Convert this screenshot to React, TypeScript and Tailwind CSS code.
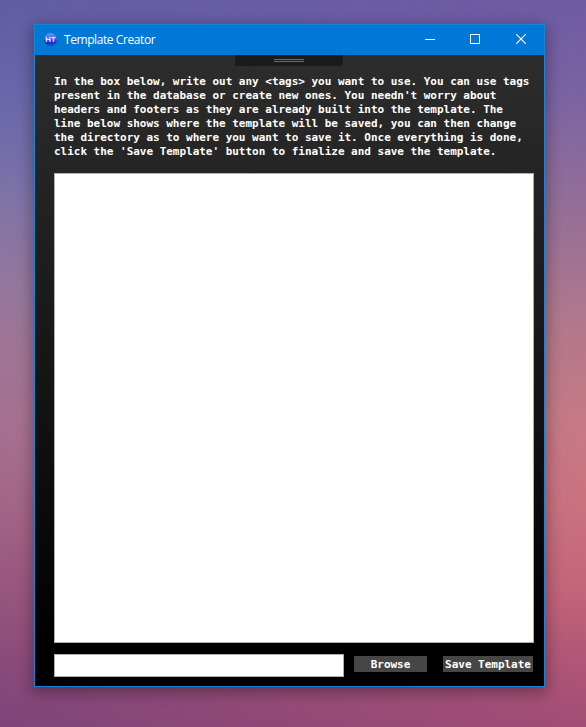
const instructions = [
  "In the box below, write out any <tags> you want to use. You can use tags",
  "present in the database or create new ones. You needn't worry about",
  'headers and footers as they are already built into the template. The',
  'line below shows where the template will be saved, you can then change',
  'the directory as to where you want to save it. Once everything is done,',
  "click the 'Save Template' button to finalize and save the template.",
];

function AppIcon() {
  return (
    <svg width="13" height="13" viewBox="0 0 13 13">
      <defs>
        <linearGradient id="orb" x1="0" y1="0" x2="0" y2="1">
          <stop offset="0" stopColor="#6f93ee" />
          <stop offset="0.45" stopColor="#4a66e0" />
          <stop offset="0.65" stopColor="#1230c8" />
          <stop offset="1" stopColor="#1c43e0" />
        </linearGradient>
      </defs>
      <circle cx="6.5" cy="6.5" r="6.4" fill="url(#orb)" />
      <text x="6.5" y="9.4" textAnchor="middle" fontSize="7.8" fontWeight="700" fontFamily="Liberation Sans, sans-serif" fill="#e8ecff">
        HT
      </text>
    </svg>
  );
}

function TitleBar() {
  return (
    <header className="flex h-[30px] shrink-0 items-center bg-[#0078d7] pl-[9px]">
      <div className="mb-[2px]">
        <AppIcon />
      </div>
      <h1 className="ml-[7px] mb-px flex-1 whitespace-nowrap font-['Open_Sans','Noto_Sans',sans-serif] text-[12px] leading-4 tracking-[-0.42px] text-white">
        Template Creator
      </h1>
      <div className="flex h-full pb-[2px] text-white">
        <button className="flex w-[45px] items-center justify-center" aria-label="Minimize">
          <svg width="10" height="10" shapeRendering="crispEdges"><path d="M0 5.5h10" stroke="currentColor" /></svg>
        </button>
        <button className="flex w-[45px] items-center justify-center" aria-label="Maximize">
          <svg width="10" height="10" shapeRendering="crispEdges"><path d="M.5 .5h9v9h-9z" fill="none" stroke="currentColor" /></svg>
        </button>
        <button className="flex w-[47px] items-center justify-center" aria-label="Close">
          <svg width="10" height="10"><path d="M.2 .2l9.6 9.6M9.8 .2L.2 9.8" stroke="currentColor" strokeWidth="1.15" /></svg>
        </button>
      </div>
    </header>
  );
}

export default function App() {
  return (
    <div className="relative h-[727px] w-[586px] overflow-hidden bg-[linear-gradient(180deg,#625da2_0%,#6865aa_11%,#7670a9_23%,#8275a5_29%,#95779d_40%,#9e7597_47%,#a57190_58%,#a46788_68%,#9a5a81_78%,#8b4c7b_90%,#7e447a_100%)] pl-[34px] pt-6">
      <div className="absolute inset-0 bg-[linear-gradient(180deg,#6f5ba3_0%,#7862a2_11%,#8b6a9b_22%,#9c7194_33%,#b0778c_43%,#c57a84_58%,#cb727e_69%,#c4657a_81%,#b35777_90%,#a24d75_100%)] [mask-image:linear-gradient(90deg,transparent_0%,black_100%)]" />
      <main className="relative flex h-[663px] w-[511px] flex-col border border-[#1883d7] bg-black shadow-[0_4px_14px_2px_rgba(0,0,0,0.33)]">
        <TitleBar />
        <section className="flex flex-1 flex-col bg-[linear-gradient(180deg,#2d2d2d_0%,#000000_94%)] pl-[19px] pr-[10px]">
          <div className="ml-[181px] flex h-[11px] w-[108px] shrink-0 flex-col items-center gap-px bg-[#1b1b1b] pt-1">
            <div className="h-px w-[30px] bg-[#6c6c6c]" />
            <div className="h-px w-[30px] bg-[#6c6c6c]" />
          </div>
          <div className="mt-[9px] whitespace-pre font-['DejaVu_Sans_Mono',monospace] text-[11px] font-bold leading-[14px] tracking-[-0.02px] text-white">
            {instructions.map((line) => (
              <p key={line}>{line}</p>
            ))}
          </div>
          <textarea className="mt-[14px] block h-[470px] w-[480px] resize-none border border-[#abadb3] bg-white" />
          <div className="mt-[11px] flex">
            <input className="h-[23px] w-[290px] border border-[#abadb3] bg-white" />
            <button className="ml-[10px] mt-[2px] h-4 w-[73px] bg-[#464646] pt-[2px] font-['DejaVu_Sans_Mono',monospace] text-[11px] font-bold leading-[14px] tracking-[-0.02px] text-white">
              Browse
            </button>
            <button className="ml-4 mt-[2px] h-4 w-[90px] whitespace-nowrap bg-[#464646] pt-[2px] font-['DejaVu_Sans_Mono',monospace] text-[11px] font-bold leading-[14px] tracking-[-0.02px] text-white">
              Save Template
            </button>
          </div>
        </section>
      </main>
    </div>
  );
}
